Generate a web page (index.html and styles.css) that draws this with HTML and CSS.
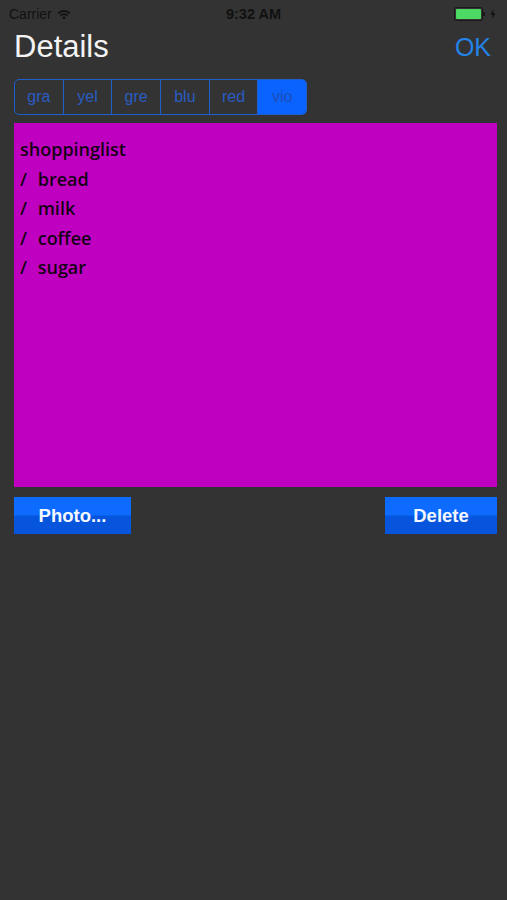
FILE: index.html
```html
<!DOCTYPE html>
<html>
<head>
<meta charset="utf-8">
<link rel="stylesheet" href="styles.css">
</head>
<body>
<div class="status">
  <div class="carrier">Carrier
    <svg class="wifi" width="14" height="11" viewBox="0 0 14 11"><path d="M7 10.5 L5.2 8.4 A2.6 2.6 0 0 1 8.8 8.4 Z" fill="#111"/><path d="M3.4 6.6 A5 5 0 0 1 10.6 6.6" stroke="#111" stroke-width="1.7" fill="none"/><path d="M1.2 4.3 A8.2 8.2 0 0 1 12.8 4.3" stroke="#111" stroke-width="1.7" fill="none"/></svg>
  </div>
  <div class="time">9:32 AM</div>
  <div class="batt">
    <span class="cell"><span class="fill"></span></span><span class="nub"></span>
    <svg width="6" height="10" viewBox="0 0 6 10"><path d="M3.5 0 L0.5 5.5 H2.8 L2.3 10 L5.5 4.2 H3.2 Z" fill="#111"/></svg>
  </div>
</div>
<div class="nav">
  <div class="title">Details</div>
  <div class="ok">OK</div>
</div>
<div class="seg">
  <div class="s">gra</div>
  <div class="s">yel</div>
  <div class="s">gre</div>
  <div class="s">blu</div>
  <div class="s">red</div>
  <div class="s sel">vio</div>
</div>
<div class="note">
  <div>shoppinglist</div>
  <div>/ bread</div>
  <div>/ milk</div>
  <div>/ coffee</div>
  <div>/ sugar</div>
</div>
<div class="actions">
  <div class="btn photo">Photo...</div>
  <div class="btn del">Delete</div>
</div>
</body>
</html>
```
FILE: styles.css
```css
html, body {
  margin: 0;
  padding: 0;
  background: #333333;
  font-family: "Liberation Sans", Arial, sans-serif;
}
.status {
  height: 28px;
  display: flex;
  align-items: center;
  justify-content: space-between;
  padding: 0 9px 0 9px;
  position: relative;
  color: #111;
}
.carrier {
  font-size: 14px;
  display: flex;
  align-items: center;
  gap: 5px;
}
.time {
  position: absolute;
  left: 0;
  right: 0;
  text-align: center;
  font-size: 14.5px;
  font-weight: bold;
  color: #111;
}
.batt {
  display: flex;
  align-items: center;
  gap: 0;
  margin-right: 2px;
}
.cell {
  width: 25px;
  height: 10px;
  border: 1px solid #1a1a1a;
  border-radius: 2px;
  padding: 1px;
  display: flex;
}
.fill {
  flex: 1;
  background: #4cd964;
  border-radius: 1px;
}
.nub {
  width: 2px;
  height: 4px;
  background: #1a1a1a;
  margin-right: 5px;
}
.nav {
  height: 51px;
  display: flex;
  justify-content: space-between;
  align-items: flex-start;
  padding: 0 16px 0 14px;
}
.title {
  font-size: 31px;
  color: #f4f4f4;
  margin-top: 1px;
  line-height: 36px;
}
.ok {
  font-size: 25px;
  color: #2383e8;
  line-height: 36px;
  margin-top: 1px;
}
.seg {
  margin-left: 14px;
  width: 293px;
  height: 36px;
  display: flex;
  border: 1px solid #1e5fd0;
  border-radius: 5px;
  box-sizing: border-box;
  overflow: hidden;
}
.s {
  flex: 1;
  display: flex;
  align-items: center;
  justify-content: center;
  font-size: 16px;
  color: #2a5cc2;
  border-left: 1px solid #1e5fd0;
}
.s:first-child {
  border-left: none;
}
.s.sel {
  background: #0a62ff;
  color: #1c4fb4;
}
.note {
  margin: 8px 10px 0 14px;
  height: 364px;
  box-sizing: border-box;
  background: #c000c0;
  padding: 12px 6px;
  font-family: "Comic Sans MS", "Open Sans", sans-serif;
  font-weight: 600;
  font-size: 18px;
  line-height: 29.5px;
  word-spacing: 6px;
  color: #150015;
}
.actions {
  display: flex;
  justify-content: space-between;
  margin: 10px 10px 0 14px;
}
.btn {
  height: 37px;
  display: flex;
  align-items: center;
  justify-content: center;
  color: #f4f8ff;
  font-weight: bold;
  font-size: 18.5px;
  background: linear-gradient(#0d6cff 0%, #0d6cff 48%, #0755dc 52%, #0755dc 100%);
}
.photo {
  width: 117px;
}
.del {
  width: 112px;
}
```
